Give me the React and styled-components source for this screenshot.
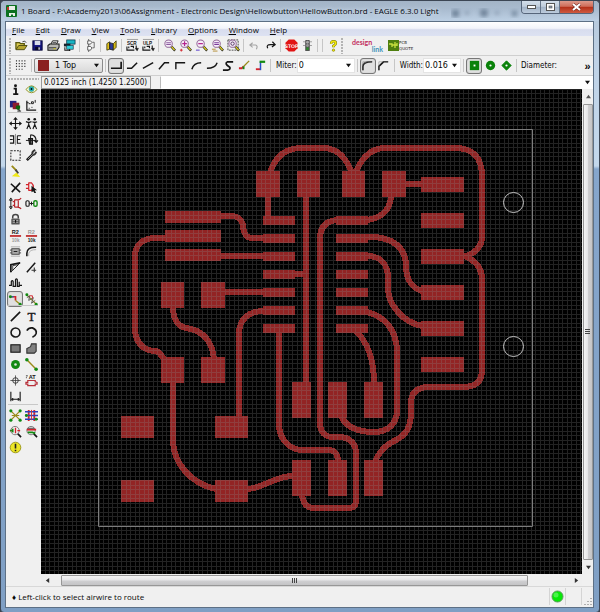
import React from 'react';
import styled, { createGlobalStyle, css } from 'styled-components';

const Global = createGlobalStyle`
  * { box-sizing: border-box; }
  html, body { margin: 0; height: 100%; }
  body { font-family: "Open Sans", "Noto Sans", sans-serif; font-size: 8px; line-height: 12px; color: #080808; background: #3d4450; }
  button, input, select { font: inherit; color: inherit; margin: 0; padding: 0; }
`;

const Window = styled.div`
  display: flex; flex-direction: column; min-height: 100vh;
  padding: 0 5px 4px 5px;
  border-radius: 5px 5px 4px 4px;
  border: 1px solid #3c4654;
  background: linear-gradient(180deg, #b4c6d9 0, #bfd2e6 60px, #c4d8ec 165px, #86a6cc 168px, #7f9fc4 100%);
`;
const TitleBar = styled.header`
  display: flex; align-items: flex-start; height: 20px; margin: 0 -5px; padding: 0 5px;
  background: linear-gradient(180deg, #a3b4c6 0, #a9bbcf 8px, #bdd0e4 100%);
  border-radius: 4px 4px 0 0;
`;
const AppIcon = styled.svg`width: 11px; height: 12px; margin: 4px 4px 0 0;`;
const Title = styled.h1`
  margin: 3px 0 0; flex: 1; min-width: 0; white-space: nowrap;
  font-size: 8px; line-height: 13px; font-weight: 400; color: #04080e;
  text-shadow: 0 0 4px #e8f0f8;
`;
const Smudges = styled.svg`width: 70px; height: 20px;`;
const Captions = styled.div`
  display: flex; height: 13px; border: 1px solid #56657a; border-top: 0; border-radius: 0 0 4px 4px; overflow: hidden;
`;
const Caption = styled.button`
  display: grid; place-items: center; border: 0; width: ${p => (p.$close ? 33 : 19)}px;
  border-right: ${p => (p.$close ? '0' : '1px solid #66768a')};
  background: ${p => p.$close
    ? 'linear-gradient(180deg,#dd9a8c 0,#cf6c58 45%,#b32f18 50%,#cf5a40 100%)'
    : 'linear-gradient(180deg,#d3deea 0,#c0cddc 45%,#a2b3c7 50%,#bccbdc 100%)'};
`;
const Client = styled.div`
  flex: 1; display: flex; flex-direction: column; background: #f0f0f0;
  border: 1px solid #5d7085; border-width: 1px 1px 1px 0; box-shadow: -1px 0 0 #5d7085;
`;
const MenuBar = styled.nav`
  display: flex; height: 14px; align-items: center;
  background: linear-gradient(180deg, #ffffff 0, #f2f4fa 45%, #d8ddee 55%, #dde2f2 100%);
`;
const MenuItem = styled.button`
  border: 0; background: none; height: 14px; padding: 0 5px 0 6px; line-height: 13px;
  &::first-letter { text-decoration: underline; }
`;
const ToolBar = styled.div`
  display: flex; align-items: center; height: 20px; padding-left: 3px;
  border-bottom: 1px solid #cfcfcf; overflow: hidden;
`;
const Grip = styled.span`
  flex: none; width: 2px; height: 16px; margin-right: ${p => p.$gap || 2}px;
  background: radial-gradient(circle at 1px 1px, #b4b4b4 1px, transparent 1px) 0 0 / 3px 3px;
`;
const Sep = styled.span`
  flex: none; width: 5px; height: 13px;
  background: linear-gradient(#c6c6c6, #c6c6c6) 2px 0 / 1px 100% no-repeat;
`;
const IconButton = styled.button`
  flex: none; display: grid; place-items: center; width: ${p => p.$w || 16}px; height: 16px;
  border: 1px solid transparent; border-radius: 3px; background: none;
  ${p => p.$on && css`border-color: #777; background: #e0e0e0; box-shadow: inset 0 0 1px #999;`}
  svg { display: block; overflow: visible; }
`;
const Field = styled.label`
  flex: none; display: flex; align-items: center; padding-left: ${p => p.$pl || 0}px; white-space: nowrap;
  font-size: 8px; font-family: "DejaVu Sans Condensed", "DejaVu Sans", sans-serif;
`;
const Combo = styled.span`
  flex: none; display: grid; align-items: center; width: ${p => p.$w}px; height: 15px; margin-left: ${p => p.$ml || 0}px;
  font: 8px "DejaVu Sans", sans-serif;
  border: 1px solid ${p => (p.$raised ? '#8a8a8a' : '#e4e4e4')}; border-radius: ${p => (p.$raised ? 2 : 0)}px;
  background: ${p => (p.$raised ? 'linear-gradient(180deg,#f0f0f0,#dadada)' : '#fff')};
  > * { grid-area: 1 / 1; }
  > svg { justify-self: end; margin-right: 3px; pointer-events: none; }
`;
const Picker = styled.select`
  appearance: none; border: 0; background: none; width: 100%; height: 13px; padding-left: ${p => p.$pl || 1}px; outline: 0;
`;
const Swatch = styled.i`width: 11px; height: 11px; margin-left: 3px; background: #8b2020;`;
const Fill = styled.span`flex: 1;`;
const More = styled.button`border: 0; background: none; width: 11px; font: bold 11px "Liberation Sans", sans-serif; line-height: 12px;`;
const LinkMark = styled.span`
  display: flex; flex-direction: column; width: 31px; font: 700 7px/7px Lato, sans-serif; color: #c22f5e; text-align: left;
  em { align-self: flex-end; font-style: normal; color: #3e93b8; }
`;

const Work = styled.div`flex: 1; display: flex; min-height: 0;`;
const Palette = styled.aside`
  flex: none; width: 35px; padding: 2px 2px 0 1px; display: flex; flex-direction: column;
`;
const PaletteGrip = styled.span`
  height: 3px; margin-left: 1px;
  background: radial-gradient(circle at 1px 1px, #b4b4b4 1px, transparent 1px) 0 0 / 3px 3px;
`;
const PaletteGroup = styled.div`
  display: grid; grid-template-columns: 16px 16px; grid-template-rows: repeat(${p => p.$rows}, 1fr);
  height: ${p => p.$h}px; align-items: center;
`;
const PaletteRule = styled.hr`width: 30px; height: 1px; margin: 1px 0 2px 1px; border: 0; background: #c8c8c8;`;

const Stage = styled.main`flex: 1; min-width: 0; display: flex; flex-direction: column;`;
const CoordRow = styled.div`display: flex; height: 13px; background: #f0f0f0;`;
const Coord = styled.output`
  width: 110px; padding-left: 2px; margin-right: 9px; border: 1px solid #9a9a9a; white-space: nowrap;
  font: 8px/11px "DejaVu Sans Condensed", "DejaVu Sans", sans-serif;
`;
const Command = styled.input`flex: 1; min-width: 0; border: 1px solid #fff; border-left-color: #bbb; outline: 0; background: #fff;`;
const DropBox = styled.button`display: grid; place-items: center; width: 12px; border: 0; background: #fff;`;
const CanvasRow = styled.div`flex: 1; display: flex; min-height: 0;`;
const Board = styled.svg`flex: 1; min-width: 0; min-height: 485px; display: block; background: #000;`;
const VBar = styled.div`
  flex: none; width: 11px; display: flex; flex-direction: column; align-items: center; background: #efefef; padding-left: 1px;
`;
const HBar = styled.div`
  flex: none; height: 12px; margin-right: 11px; display: flex; align-items: center; background: #efefef; padding-top: 1px;
`;
const Arrow = styled.button`
  display: grid; place-items: center; border: 0; background: none; width: ${p => p.$w || 10}px; height: ${p => p.$h || 11}px;
`;
const VThumb = styled.span`
  flex: 1; width: 10px; display: grid; place-items: center; border: 1px solid #979797; border-radius: 1px;
  background: linear-gradient(90deg, #f5f5f5, #e6e6e8 45%, #cfcfd1 55%, #c4c4c6);
`;
const HThumb = styled.span`
  flex: 1; height: 11px; margin: 0 42px 0 8px; display: grid; place-items: center; border: 1px solid #979797; border-radius: 1px;
  background: linear-gradient(180deg, #f5f5f5, #e6e6e8 45%, #cfcfd1 55%, #c4c4c6);
`;
const StatusBar = styled.footer`
  display: flex; align-items: stretch; height: 21px; padding-left: 6px; border-top: 1px solid #d8d8d8;
`;
const StatusText = styled.p`margin: 0; flex: 1; line-height: 20px; white-space: nowrap;`;
const StatusCell = styled.span`
  display: grid; place-items: center; width: ${p => p.$w}px; margin: 1px 0 2px; border-left: 1px solid #d4d4d4;
`;

const Tri = ({ d = 'down', s = 5, c = '#111' }) => (
  <svg width={s} height={s} viewBox="0 0 6 6" fill={c} aria-hidden="true">
    <path d={{ down: 'M0 1H6L3 5Z', up: 'M0 5H6L3 1Z', left: 'M5 0V6L1 3Z', right: 'M1 0V6L5 3Z' }[d]} />
  </svg>
);

const K = '#161616', R = '#d3232b', G = '#128a12', Y = '#e8d820', O = '#9a8a18';
const P = ({ d, c = K, w = 1.4, f = 'none' }) => <path d={d} stroke={c} strokeWidth={w} fill={f} />;
const Lens = ({ x = 6, y = 5, children }) => (
  <>
    <P d={`M${x + 2} ${y + 2}L13 12.5`} c="#222" w={2.6} />
    <P d={`M${x + 3} ${y + 3}L12.5 12`} c={Y} w={1.4} />
    <circle cx={x} cy={y} r="4" fill="#f6eef8" stroke="#93689a" strokeWidth="1.1" />
    {children}
  </>
);
const Tiny = ({ x = 0, y, c = K, s = 6, children }) => (
  <text x={x} y={y} fontSize={s} fontWeight="700" fontFamily="Liberation Sans, sans-serif" fill={c}>{children}</text>
);
const Node = ({ x, y, r = 1.6 }) => <circle cx={x} cy={y} r={r} fill={G} />;

const art = {
  open: <><P d="M1 11V4H5L6 5H10V7" c="#5b5a10" f="#dccb50" /><P d="M1 11.500L4 7H13L10 11.500Z" c="#4b4a10" f="#b5a52e" w={1} /><P d="M8 3Q11 1 12 4" w={0.8} /></>,
  save: <><rect x="2" y="2" width="10" height="10" fill="#15157e" stroke="#08083a" /><rect x="4" y="2" width="6" height="4.500" fill="#d7dbe8" /><rect x="4.500" y="8.500" width="5" height="3.500" fill="#0a0a28" /><rect x="8" y="9" width="1.500" height="2.500" fill="#ddd" /></>,
  print: <><P d="M4 6L6 2H12L10 6" f="#fff" w={1} /><P d="M1 7L3 5.500H13V9L11 12H1Z" f="#b9b9b4" w={1.1} /><P d="M2 9.500H10M6 4H10" w={0.9} /><rect x="7" y="10" width="2.500" height="1" fill="#d8d010" /></>,
  cam: <><rect x="4" y="1" width="9" height="4.500" fill="#18b4c4" stroke="#134" strokeWidth=".8" /><rect x="1" y="5" width="7" height="3" fill="#16222b" /><rect x="4" y="7" width="7" height="4" fill="#2fd0dc" stroke="#134" strokeWidth=".7" /><P d="M2 9V12H8M7 11V13" w={1.1} /></>,
  sheet: <><P d="M5 0V2M9 3.500H11V9.500H9M5 12V14M5 5V8" w={0.9} c="#555" /><path d="M4 2H7Q10 3.500 7 5.500H4ZM4 8H7Q10 9.500 7 12H4Z" fill="#fff" stroke="#444" strokeWidth=".9" /></>,
  lib: <><P d="M2 5L5 3V11L2 12Z" f="#e2c31c" c="#3d3a10" w={0.9} /><P d="M5 4L9 5V12L5 11Z" f="#2c3a9a" c="#222" w={0.9} /><P d="M9 5L12 2V9L9 12Z" f="#d8bc1a" c="#3d3a10" w={0.9} /></>,
  scr: <><Tiny y={6} x={1} s={5}>SCR</Tiny><P d="M1 8V12H9M3 8V10M5 8H8V10M11 7V11" w={1.2} /><P d="M10 10L12 13L13.500 10Z" f={K} w={0.4} /><P d="M1 .5H13" w={0.7} c="#777" /></>,
  ulp: <><Tiny y={6} x={1} s={5}>ULP</Tiny><P d="M1 8V12H9M3 8V10M5 8H8V10M11 7V11" w={1.2} /><P d="M10 10L12 13L13.500 10Z" f={K} w={0.4} /><P d="M1 .5H13" w={0.7} c="#777" /></>,
  zfit: <Lens><P d="M3.500 4H8.500M3.500 6H8.500" c="#8c5ba0" w={1.1} /></Lens>,
  zin: <Lens><P d="M3.500 5H8.500M6 2.500V7.500" c="#b3248e" w={1.3} /><P d="M1 12H4M2.500 10.500V13.500" c={R} w={1} /></Lens>,
  zout: <Lens><P d="M3.500 5H8.500" c="#b3248e" w={1.3} /><P d="M1 12H5" c="#6850cf" w={1.2} /></Lens>,
  zredraw: <Lens><P d="M3.500 4H8.500M3.500 6H8.500" c="#7b3a9a" w={1.1} /><P d="M1 11H5M2 13H7" c="#b28a30" w={1} /></Lens>,
  zsel: <><rect x="1" y="1" width="11" height="11" fill="none" stroke="#444" strokeDasharray="2 1" /><Lens><circle cx="6" cy="5" r="1.800" fill="none" stroke="#513060" /></Lens></>,
  undo: <P d="M5 4L2 6.500L5 9M2 6.500H8Q11 7 9 11" c="#a4a4a4" w={1.2} />,
  redo: <P d="M9 3L12 6L8.500 8.500M12 6H7Q2 6 4 10" w={1.3} />,
  stop: <><path d="M4 .5H10L13.500 4V10L10 13.500H4L.5 10V4Z" fill="#e11414" /><text x="7" y="9.300" textAnchor="middle" fontSize="5.500" fontWeight="700" fontFamily="Liberation Sans, sans-serif" fill="#fff" textRendering="geometricPrecision">STOP</text></>,
  go: <><rect x="4.500" y="1" width="5" height="12" rx="1" fill="#555" /><circle cx="7" cy="3.500" r="1.500" fill="#aaa" /><circle cx="7" cy="7" r="1.500" fill="#999" /><circle cx="7" cy="10.500" r="1.500" fill="#2b8b2b" /><P d="M2.500 3H4M10 3H11.500M2.500 7H4M10 7H11.500" w={1} c="#777" /></>,
  help: <><P d="M4.500 5Q4.500 2.500 7 2.500Q9.500 2.500 9.500 4.500Q9.500 6 7 7.500V9" c="#6d6d00" w={2.8} /><P d="M4.500 5Q4.500 2.500 7 2.500Q9.500 2.500 9.500 4.500Q9.500 6 7 7.500V9" c="#f1e70c" w={1.8} /><circle cx="7" cy="12" r="1.300" fill="#f1e70c" stroke="#6d6d00" strokeWidth=".6" /></>,
  grid: <path d="M1 2H13M1 5H13M1 8H13M1 11H9" stroke="#333" strokeWidth="1.200" strokeDasharray="1.200 1.800" fill="none" />,
  b0: <P d="M1 10H12V3" w={1.8} />, b1: <P d="M1 10H6L12 4" w={1.6} />, b2: <P d="M1 10L12 4" w={1.6} />,
  b3: <P d="M1 11L7 4H12" w={1.6} />, b4: <P d="M2 11V4H12" w={1.5} />, b5: <P d="M2 11Q4 4 12 4" w={1.6} />,
  b6: <P d="M1 10Q10 10 12 4" w={1.5} />, b7: <P d="M1 12H6Q10 11 8 8.500Q2 5 6 3H12" w={1.9} />,
  b8: <><P d="M1 10H4L6 8" c={R} w={2} /><P d="M6 8L12 2" c={O} w={1.4} /><P d="M6 11V8" c={G} w={2} /></>,
  b9: <><P d="M2 11H7" c={R} w={2} /><P d="M7 12V3" c="#2450c8" w={1.6} /><P d="M6 3H12" c={G} w={2.4} /></>,
  m0: <><P d="M2 12V8Q2 3 12 3" w={1.8} /><P d="M2 5L6 3" w={0.8} c="#777" /><P d="M2 12V3H12" w={0.6} c="#888" /></>,
  m1: <><P d="M2 12V8L7 3H12" w={1.8} /><P d="M2 12V3H12" w={0.6} c="#888" /></>,
  sq: <><rect x="2" y="2" width="10" height="10" fill="#0a820a" /><rect x="6" y="6" width="2" height="2" fill="#fff" /></>,
  ro: <><circle cx="7" cy="7" r="5" fill="#0a820a" /><circle cx="7" cy="7" r="1.200" fill="#fff" /></>,
  oc: <><path d="M7 2L12 7L7 12L2 7Z" fill="#0a820a" stroke="#0a820a" strokeLinejoin="round" /><circle cx="7" cy="7" r="1.200" fill="#fff" /></>,
  info: <><circle cx="7" cy="3" r="1.600" fill={K} /><P d="M5 6H7.500V12M4.500 12H10" w={2} /></>,
  show: <><path d="M1 7Q7 -1 13 7Q7 14 1 7Z" fill="#f5fbe0" stroke="#8d8d1c" /><circle cx="7" cy="6.500" r="2.600" fill="#28b8c4" stroke="#186" strokeWidth=".6" /><circle cx="7" cy="6.500" r="1" fill="#000" /></>,
  layer: <><rect x="1" y="2" width="7" height="7" fill="#23237f" /><rect x="4" y="4" width="7" height="7" fill="#8e1c30" /><path d="M8 7H12V10L10 12L7 10Z" fill="#0b650b" /><P d="M9 13H13M11 11V13" w={1} /></>,
  mark: <><P d="M2 2V12H12" w={1.3} /><P d="M4 10H5M7 9H8M4 5H6M2 4H4M7 5H9V3H7ZM11 1V4" w={1} /></>,
  move: <><P d="M7 2V12M2 7H12" w={1.2} /><path d="M7 0L9.500 3H4.500ZM7 14L9.500 11H4.500ZM0 7L3 4.500V9.500ZM14 7L11 4.500V9.500Z" fill={K} /></>,
  copy: <><circle cx="4" cy="2.500" r="1.400" fill={K} /><circle cx="10.500" cy="2.500" r="1.400" fill={K} /><P d="M1 5L4 6L7 5M4 5V9M4 8L2 13M4 8L6 13M8 5L10.500 6L13 5M10.500 5V9M10.500 8L8.500 13M10.500 8L12.500 13" w={1.2} /></>,
  mirror: <><P d="M1 3H5V11H1M1 7H4" w={1.3} /><P d="M9 3H13M9 3V11H13M9 7H12" w={1.1} /><P d="M7 1V13" w={0.8} c="#777" /></>,
  rotate: <><P d="M4 6H8V12H5Z" w={1.3} f="#777" /><P d="M6 2V12M1 8H12" w={1} /><P d="M6 2Q12 2 12 9M10 8L12 10L14 8" w={1.3} /></>,
  group: <rect x="2" y="2" width="10" height="10" fill="none" stroke="#222" strokeWidth="1.100" strokeDasharray="2 1.300" />,
  change: <><P d="M2 12L8 6" w={2.8} /><P d="M8 6Q7 3 11 1M8 6Q11 7 12 3" w={2} c="#333" /><P d="M3 11L8 6" w={0.8} c="#bbb" /></>,
  brush: <><P d="M3 1L8 6" c={O} w={2} /><P d="M7 5L10 9" c="#444" w={2} /><path d="M3 12L8 8L12 13Z" fill="#f0e818" /></>,
  del: <P d="M2 3L12 12M12 2L3 12" w={1.7} />,
  pick: <><P d="M1 4H4M1 8H4M4 1.500V10.500M4 2H7Q11 6 7 10H4" c={R} w={1.3} /><path d="M7 5L13 10H10.500L12 13H10L9 11L7 12Z" fill={K} /></>,
  pins: <><P d="M2 1L3.500 3.500H.5ZM2 13L3.500 10.500H.5ZM2 3V11" w={1} /><P d="M6 3V11M4 5H6M4 9H6M6 3H9Q12 3 13 1M6 11H9Q12 11 13 13M10 3V11" c="#b7272d" w={1.3} /></>,
  swap: <><rect x="1" y="4" width="3.500" height="6" rx="1.500" fill="none" stroke={K} strokeWidth="1.200" /><rect x="9.500" y="4" width="3.500" height="6" rx="1.500" fill="none" stroke={G} strokeWidth="1.500" /><P d="M5 7H9M7 5V9" w={1} /></>,
  lock: <><P d="M4 6V4Q4 1.500 7 1.500Q10 1.500 10 4V6" w={1.6} c="#444" /><rect x="2.500" y="6" width="9" height="6.500" rx="1" fill="#555" /><P d="M4 8H10M4 10H10" w={0.8} c="#ccc" /><rect x="6.500" y="7.500" width="1.200" height="3" fill="#111" /></>,
  name: <><Tiny x={3} y={5} s={6}>R2</Tiny><P d="M1 7.500H13" c="#c13434" w={2} /><Tiny x={3} y={13.500} s={5} c="#999">10k</Tiny></>,
  value: <><Tiny x={3} y={5} s={6} c="#999">R2</Tiny><P d="M1 7.500H13" c="#c13434" w={2} /><Tiny x={3} y={13.500} s={5}>10k</Tiny></>,
  smash: <><rect x="3" y="4" width="8" height="6" fill="#aaa" stroke="#444" /><P d="M2 2H12M2 12H12" w={0.8} c="#999" /><P d="M1 5.500H3M11 5.500H13M1 8.500H3M11 8.500H13" w={1} c="#444" /><P d="M5 7H9" w={1} /></>,
  miter: <><P d="M2 12V9Q2 2 12 2.500" w={1.7} /><P d="M4 12V9Q5 5 12 5" w={0.7} c="#999" /></>,
  split: <><P d="M2 12V4L12 2" w={1.8} /><P d="M2 12L12 2M4 5L10 4L4 10Z" w={0.8} /></>,
  opti: <><P d="M2 12L11 2" w={1.6} /><P d="M7 10H12M10 7V12" w={1.2} c="#333" /></>,
  meander: <P d="M0 9H2.500V5Q3.500 3 4.500 5V10H7V3Q8 1 9 3V10H11V5M11 9H14" w={1.3} />,
  route: <><P d="M1 4H7V8" c={R} w={1.8} /><P d="M7 8L12 12" c={O} w={1.4} /><P d="M2 4H5" c="#2b62a2" w={1.6} /><Node x={1.500} y={4} /><Node x={12} y={12} /></>,
  rip: <><P d="M2 2L12 12" c={O} w={1.4} /><P d="M2 5L5 3L4 8L9 5L7 11L11 8" c="#555" w={1} /><P d="M5 3H8V6" c={R} w={1} /><Node x={2} y={2} /><Node x={12} y={12} /></>,
  wire: <P d="M2 12L12 2" w={1.7} />,
  text: <text x="7" y="12" textAnchor="middle" fontFamily="Liberation Serif, serif" fontSize="14" stroke={K} strokeWidth=".4" fill={K}>T</text>,
  circle: <circle cx="7" cy="7" r="4.800" fill="none" stroke={K} strokeWidth="1.700" />,
  arc: <P d="M2 5Q4 1.500 8 2Q13 4 12 8Q11 11 8 12" w={1.8} />,
  rect: <rect x="2" y="3" width="10" height="8" fill="#777" stroke={K} strokeWidth="1.200" />,
  poly: <path d="M2 12V7L6 5L7 2H12V10L10 12Z" fill="#808080" stroke="#333" strokeWidth="1.200" />,
  via: <><circle cx="7" cy="7" r="4.800" fill={G} /><circle cx="7" cy="7" r="1.400" fill="#dfe8df" /></>,
  signal: <><P d="M2 2L12 12" c={O} w={1.5} /><Node x={2} y={2} r={1.900} /><Node x={12} y={12} r={1.900} /></>,
  hole: <><circle cx="7" cy="7" r="3" fill="none" stroke="#333" /><P d="M7 1.500V12.500M1.500 7H12.500" w={0.8} c="#333" /></>,
  attr: <><Tiny x={4} y={5.500} s={6}>AT</Tiny><P d="M1 2H3M1 4H2" w={1} c="#333" /><path d="M3 7H11V8.500L13 9V11H11V12.500H3V11H1V9H3Z" fill="#eee" stroke="#b8303a" strokeWidth="1.300" /></>,
  dim: <P d="M2 2V12M12 2V12M2 10H12M4 8.500V11.500M10 8.500V11.500" w={1.2} />,
  rats: <><P d="M2 2L12 12M12 2L2 12M3 7H11" c={O} w={1.3} /><Node x={2} y={2} r={1.700} /><Node x={12} y={2} r={1.700} /><Node x={2} y={12} r={1.700} /><Node x={12} y={12} r={1.700} /></>,
  auto: <><P d="M4 1V13M10 1V13" c={R} w={2} /><P d="M0 3H14M0 7H14M0 11H14" c="#2b3fbd" w={1.7} /><P d="M7 1V12" c="#c33" w={1} /><Node x={1.500} y={7} /><Node x={12} y={11} /></>,
  erc: <><P d="M9 9L13 13" w={1.8} /><circle cx="6.500" cy="6" r="4.500" fill="#eee" stroke="#777" /><P d="M1 6H4M7 3V9M9 6H12" c={R} w={1.4} /><P d="M4 4V8" c={G} w={1.8} /><P d="M1 6H3" c={G} w={1.5} /></>,
  drc: <><P d="M9 9L13 13" w={1.8} /><circle cx="6.500" cy="6" r="4.500" fill="#eee" stroke="#777" /><P d="M2 5H12" c={R} w={2} /><P d="M3 3.500H10" c="#444" w={1} /><P d="M3 8H8L11 9" c={G} w={2} /></>,
  errors: <><circle cx="7" cy="7" r="5.700" fill="#ece626" stroke="#9a9618" strokeWidth="1" /><P d="M7 3V8M7 9.500V11" c="#222" w={1.7} /></>,
};

const Tool = ({ id, label, on, w }) => (
  <IconButton type="button" aria-label={label || id} aria-pressed={on ? true : undefined} $on={on} $w={w}>
    <svg width="13" height="13" viewBox="0 0 14 14">{art[id]}</svg>
  </IconButton>
);

const pads = [
  [256, 171, 24, 26], [297, 171, 23, 26], [342, 171, 23, 26], [382, 171, 24, 26],
  [165, 211, 56, 12], [165, 230, 56, 12], [165, 249, 56, 12],
  [161, 282, 23, 26], [201, 282, 24, 26], [161, 357, 23, 26], [201, 357, 24, 26],
  [121, 416, 33, 22], [215, 416, 33, 22], [121, 480, 33, 22], [215, 480, 33, 22],
  ...[292, 328, 364].flatMap(x => [[x, 382, 19, 36], [x, 460, 19, 36]]),
  ...[0, 1, 2, 3, 4, 5, 6].flatMap(i => [[263, 216 + i * 18, 32, 9], [336, 216 + i * 18, 32, 9]]),
  ...[0, 1, 2, 3, 4, 5].map(i => [421, 177 + i * 36, 43, 15]),
];
const traces = [
  'M268 184C270 164 280 148 301 148H323C338 148 347 158 354 178',
  'M354 178C359 160 370 148 385 148H455C474 148 482 158 482 177V237C482 246 475 254 464 256.500',
  'M464 256C475 260 482 267 482 280V370C482 382 475 387 463 387H427C416 388 411 394 411 403V412C411 429 405 435 396 440C384 446 379 452 374 464',
  'M406 184H421', 'M391 197C390 210 381 219 366 220',
  'M337 220C326 221 320 227 320 239V423C320 432 325 437 333 437H339C350 437 356 444 356 453V500Q356 508 348 508H314Q303 508 302 494',
  'M306 190V390', 'M268 190V220', 'M220 216H231C239 216 243 221 243 227C244 234 246 238 252 238H264',
  'M220 256H264', 'M294 274H306', 'M224 292H264',
  'M166 238H154C142 239 135 245 135 256V330C136 343 143 350 154 351Q159 351 161 355L166 361',
  'M173 306C173 318 176 326 186 328C203 330 213 342 214 360',
  'M239 418V334C239 320 248 311 264 311',
  'M279 330V426C280 440 290 450 303 450H329C335 450 338 455 338 462',
  'M173 380V440C173 464 192 484 216 489',
  'M247 489C265 488 274 476 293 476',
  'M367 237C393 236 406 248 406 266C406 279 412 288 422 291',
  'M367 256C382 256 388 266 388 278V288C388 304 402 322 422 326',
  'M360 311C384 313 397 330 397 352V410C397 424 388 432 374 432C358 432 346 427 341 416',
  'M356 331C367 342 374 357 374 384',
];

const BoardView = () => (
  <Board role="img" aria-label="Board layout">
    <defs>
      <pattern id="grid" x="8" y="4" width="9" height="9" patternUnits="userSpaceOnUse">
        <path d="M0 0H9V1H0ZM0 5H9V6H0ZM0 1H1V5H0ZM0 6H1V9H0ZM5 1H6V5H5ZM5 6H6V9H5Z" fill="#8c8c8c" fillOpacity=".25" />
      </pattern>
    </defs>
    <g transform="translate(-41 -89)" shapeRendering="crispEdges">
      <g fill="none" stroke="#922424" strokeWidth="6">{traces.map(d => <path key={d} d={d} />)}</g>
      <g fill="#922424">{pads.map(([x, y, width, height]) => <rect key={`${x}-${y}`} {...{ x, y, width, height }} />)}</g>
    </g>
    <rect width="100%" height="100%" fill="url(#grid)" />
    <g transform="translate(-41 -89)" fill="none">
      <path d="M98.500 129.500H532.500V526.500H98.500Z" stroke="#7d7d7d" />
      <circle cx="513.500" cy="202.500" r="10" stroke="#c4c4c4" />
      <circle cx="513.500" cy="346.500" r="10" stroke="#c4c4c4" />
    </g>
  </Board>
);

const palette = [
  [2, 30, ['info', 'show', 'layer', 'mark']],
  [12, 189, ['move', 'copy', 'mirror', 'rotate', 'group', 'change', 'brush', null, 'del', 'pick', 'pins', 'swap', 'lock', null, 'name', 'value', 'smash', 'miter', 'split', 'opti', 'meander', null, 'route', 'rip']],
  [6, 95, ['wire', 'text', 'circle', 'arc', 'rect', 'poly', 'via', 'signal', 'hole', 'attr', 'dim', null]],
  [3, 48, ['rats', 'auto', 'erc', 'drc', 'errors', null]],
];

export default function App() {
  return (
    <>
      <Global />
      <Window>
        <TitleBar>
          <AppIcon viewBox="0 0 11 12" aria-hidden="true">
            <rect width="11" height="12" rx="1" fill="#0c7020" />
            <rect x="3" y="1" width="6" height="4" fill="#e9efe6" />
            <rect x="1" y="2" width="2" height="3" fill="#b8342c" />
            <path d="M3 8H9V11H7V9.500H5V11H3Z" fill="#e8f0e8" />
          </AppIcon>
          <Title>1 Board - F:\Academy2013\06Assignment - Electronic Design\Hellowbutton\HellowButton.brd - EAGLE 6.3.0 Light</Title>
          <Smudges aria-hidden="true">
            <defs><filter id="soft"><feGaussianBlur stdDeviation="2" /></filter></defs>
            <g filter="url(#soft)" fill="#52677e" opacity=".7">
              <rect x="1" y="9" width="7" height="7" /><rect x="14" y="11" width="4" height="2" />
              <circle cx="33" cy="12" r="4" /><rect x="44" y="11" width="4" height="2" /><rect x="61" y="10" width="5" height="5" />
            </g>
          </Smudges>
          <Captions>
            <Caption type="button" aria-label="Minimize"><svg width="9" height="4"><rect x=".5" y=".5" width="8" height="3" fill="#fff" stroke="#555" /></svg></Caption>
            <Caption type="button" aria-label="Maximize"><svg width="9" height="8"><rect x=".5" y=".5" width="8" height="7" fill="#fff" stroke="#555" /><rect x="3" y="3" width="3" height="2" fill="#8a9aad" stroke="#555" strokeWidth=".6" /></svg></Caption>
            <Caption type="button" $close aria-label="Close"><svg width="9" height="8" viewBox="0 0 9 8"><path d="M1 1L8 7M8 1L1 7" stroke="#6e2a20" strokeWidth="3" /><path d="M1 1L8 7M8 1L1 7" stroke="#fff" strokeWidth="2" /></svg></Caption>
          </Captions>
        </TitleBar>
        <Client>
          <MenuBar aria-label="Main menu">
            {['File', 'Edit', 'Draw', 'View', 'Tools', 'Library', 'Options', 'Window', 'Help'].map(m => <MenuItem key={m} type="button">{m}</MenuItem>)}
          </MenuBar>
          <ToolBar role="toolbar" aria-label="Actions">
            <Grip />
            {['open', 'save', 'print', 'cam', '|', 'sheet', '|', 'lib', '|', 'scr', 'ulp', '|', 'zfit', 'zin', 'zout', 'zredraw', 'zsel', '|', 'undo', 'redo', '|', 'stop', 'go', '|', '|', 'help'].map((t, i) => (t === '|' ? <Sep key={i} /> : <Tool key={i} id={t} />))}
            <Grip $gap={8} />
            <IconButton type="button" aria-label="Design link" $w={32}>
              <LinkMark>design<em>link</em></LinkMark>
            </IconButton>
            <IconButton type="button" aria-label="PCB quote" $w={36}>
              <svg width="28" height="13"><rect x="1" y="1" width="11" height="11" fill="#4f7f10" /><path d="M2 5H5V8M8 3V9M5 6H10M10 4V7" stroke="#c9e040" fill="none" strokeWidth="1.300" /><g fontSize="4" fontFamily="DejaVu Sans, sans-serif" fill="#222"><text x="12" y="5">PCB</text><text x="12" y="11">QUOTE</text></g></svg>
            </IconButton>
          </ToolBar>
          <ToolBar role="toolbar" aria-label="Parameters">
            <Grip />
            <Tool id="grid" label="Grid" />
            <Sep />
            <Combo $w={69} $raised>
              <Swatch />
              <Picker $pl={20} aria-label="Layer" defaultValue="1 Top"><option>1 Top</option></Picker>
              <Tri />
            </Combo>
            <Sep />
            {[0, 1, 2, 3, 4, 5, 6, 7, 8, 9].map(i => <Tool key={i} id={`b${i}`} label={`Bend style ${i}`} on={i === 0} />)}
            <Sep />
            <Field $pl={3}>Miter:<Combo $w={58}><Picker defaultValue="0"><option>0</option></Picker><Tri /></Combo></Field>
            <Sep />
            <Tool id="m0" label="Round miter" on /><Tool id="m1" label="Straight miter" />
            <Sep />
            <Field $pl={3}>Width:<Combo $w={38}><Picker defaultValue="0.016"><option>0.016</option></Picker><Tri /></Combo></Field>
            <Sep />
            <Tool id="sq" label="Square via" on /><Tool id="ro" label="Round via" /><Tool id="oc" label="Octagon via" />
            <Sep />
            <Field as="span" $pl={2}>Diameter:</Field>
            <Fill />
            <More type="button" aria-label="More parameters">»</More>
          </ToolBar>
          <Work>
            <Palette aria-label="Commands">
              <PaletteGrip />
              {palette.map(([rows, h, ids], gi) => (
                <React.Fragment key={gi}>
                  {gi > 0 && <PaletteRule />}
                  <PaletteGroup $rows={rows} $h={h}>
                    {ids.map((id, i) => (id ? <Tool key={id} id={id} on={id === 'route'} /> : <span key={i} />))}
                  </PaletteGroup>
                </React.Fragment>
              ))}
            </Palette>
            <Stage>
              <CoordRow>
                <Coord>0.0125 inch (1.4250 1.2500)</Coord>
                <Command aria-label="Command line" />
                <DropBox type="button" aria-label="Command history"><Tri /></DropBox>
              </CoordRow>
              <CanvasRow>
                <BoardView />
                <VBar>
                  <Arrow type="button" aria-label="Scroll up" $h={15}><Tri d="up" c="#555" /></Arrow>
                  <VThumb><svg width="6" height="6" aria-hidden="true"><path d="M0 .5H5M0 2.500H5M0 4.500H5" stroke="#444" /></svg></VThumb>
                  <Arrow type="button" aria-label="Scroll down" $h={14}><Tri d="down" c="#333" /></Arrow>
                </VBar>
              </CanvasRow>
              <HBar>
                <Arrow type="button" aria-label="Scroll left" $w={12}><Tri d="left" c="#333" /></Arrow>
                <HThumb><svg width="6" height="6" aria-hidden="true"><path d="M.5 0V5M2.500 0V5M4.500 0V5" stroke="#444" /></svg></HThumb>
                <Arrow type="button" aria-label="Scroll right" $w={12}><Tri d="right" c="#333" /></Arrow>
              </HBar>
            </Stage>
          </Work>
          <StatusBar>
            <StatusText>♦ Left-click to select airwire to route</StatusText>
            <StatusCell $w={16}>
              <svg width="13" height="13"><circle cx="6.500" cy="6.500" r="5.500" fill="#08e808" stroke="#5a9a5a" /><circle cx="5" cy="5" r="2.500" fill="#8cff8c" opacity=".5" /></svg>
            </StatusCell>
            <StatusCell $w={16} />
            <StatusCell $w={12}>
              <svg width="10" height="16"><path d="M8 9V10M8 12V13M5 12V13M8 15V16M5 15V16M2 15V16" stroke="#999" strokeWidth="1.500" /></svg>
            </StatusCell>
          </StatusBar>
        </Client>
      </Window>
    </>
  );
}
